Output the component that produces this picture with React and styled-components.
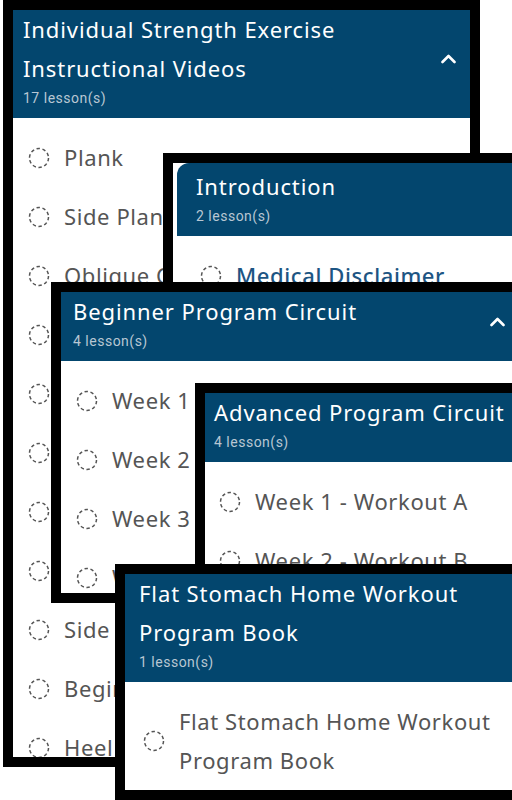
import styled, { createGlobalStyle } from "styled-components";

const GlobalStyle = createGlobalStyle`
  *, *::before, *::after { box-sizing: border-box; }
  html, body { margin: 0; padding: 0; background: #fff; }
  body { font-family: "Noto Sans", "DejaVu Sans", sans-serif; }
`;

// Course sections, each captured as a framed window on the canvas
const sections = [
  {
    id: "strength",
    x: 3, y: 0, w: 477, h: 767,
    title: "Individual Strength Exercise Instructional Videos",
    count: 17,
    open: true,
    lessons: [
      "Plank", "Side Plank", "Oblique Crunch", "Bird Dog", "Glute Bridge",
      "Superman", "Bicycle Crunch", "Reverse Crunch", "Side Lunge",
      "Beginner Push Up", "Heel Touches",
    ],
  },
  {
    id: "intro",
    x: 163, y: 153, w: 400, h: 220,
    title: "Introduction",
    count: 2,
    rounded: true,
    inset: 4,
    padTop: 4,
    headPad: 19,
    indent: 23,
    link: true,
    lessons: ["Medical Disclaimer", "How To Use This Program"],
  },
  {
    id: "beginner",
    x: 51, y: 282, w: 478, h: 321,
    title: "Beginner Program Circuit",
    count: 4,
    open: true,
    headPad: 12,
    lessons: [
      "Week 1 - Workout A", "Week 2 - Workout B",
      "Week 3 - Workout C", "Week 4 - Workout D",
    ],
  },
  {
    id: "advanced",
    x: 195, y: 383, w: 440, h: 250,
    title: "Advanced Program Circuit",
    count: 4,
    open: true,
    headPad: 9,
    indent: 14,
    lessons: ["Week 1 - Workout A", "Week 2 - Workout B", "Week 3 - Workout C"],
  },
  {
    id: "flat",
    x: 115, y: 564, w: 420, h: 236,
    title: "Flat Stomach Home Workout Program Book",
    count: 1,
    headPad: 14,
    indent: 18,
    lessons: ["Flat Stomach Home Workout Program Book"],
  },
];

const DashedCircle = () => (
  <svg width="22" height="22" viewBox="0 0 22 22">
    <circle
      cx="11"
      cy="11"
      r="9.5"
      fill="none"
      stroke="#555"
      strokeWidth="1.5"
      strokeDasharray="3.4 2.6"
    />
  </svg>
);

const ChevronUp = () => (
  <svg width="15" height="10" viewBox="0 0 15 10">
    <polyline
      points="1.5,8 7.5,2 13.5,8"
      fill="none"
      stroke="#fff"
      strokeWidth="2.6"
      strokeLinecap="round"
      strokeLinejoin="round"
    />
  </svg>
);

const Section = ({ s }) => (
  <Frame $x={s.x} $y={s.y} $w={s.w} $h={s.h} $inset={s.inset}>
    <Header $rounded={s.rounded} $pt={s.padTop} $pl={s.headPad}>
      <HeaderText>
        <Title>{s.title}</Title>
        <Count>{s.count} lesson(s)</Count>
      </HeaderText>
      {s.open && (
        <Toggle>
          <ChevronUp />
        </Toggle>
      )}
    </Header>
    <LessonList>
      {s.lessons.map((name) => (
        <Lesson key={name} $indent={s.indent}>
          <Status>
            <DashedCircle />
          </Status>
          <LessonName $link={s.link}>{name}</LessonName>
        </Lesson>
      ))}
    </LessonList>
  </Frame>
);

export default function App() {
  return (
    <>
      <GlobalStyle />
      <Canvas>
        {sections.map((s) => (
          <Section key={s.id} s={s} />
        ))}
      </Canvas>
    </>
  );
}

// --- styles ---

const Canvas = styled.div`
  position: relative;
  width: 512px;
  height: 800px;
  overflow: hidden;
  background: #fff;
`;

const Frame = styled.section`
  position: absolute;
  left: ${(p) => p.$x}px;
  top: ${(p) => p.$y}px;
  width: ${(p) => p.$w}px;
  height: ${(p) => p.$h}px;
  border: 10px solid #000;
  padding-left: ${(p) => p.$inset || 0}px;
  background: #fff;
  overflow: hidden;
  display: flex;
  flex-direction: column;
`;

const Header = styled.header`
  display: flex;
  align-items: center;
  gap: 12px;
  padding: ${(p) => p.$pt || 0}px 14px 10px ${(p) => p.$pl || 10}px;
  background: #03466e;
  color: #fff;
  border-top-left-radius: ${(p) => (p.$rounded ? "12px" : "0")};
  flex-shrink: 0;
`;

const HeaderText = styled.div`
  flex: 1;
  min-width: 0;
`;

const Title = styled.h3`
  margin: 0;
  font-size: 22px;
  font-weight: 400;
  line-height: 39px;
  letter-spacing: 0.9px;
`;

const Count = styled.div`
  font-family: Roboto, "Liberation Sans", sans-serif;
  font-size: 14px;
  line-height: 20px;
  letter-spacing: 0.5px;
  color: #b8c7d3;
`;

const Toggle = styled.span`
  display: flex;
  flex-shrink: 0;
`;

const LessonList = styled.ul`
  list-style: none;
  margin: 0;
  padding: 10px 0 0;
`;

const Lesson = styled.li`
  display: flex;
  align-items: center;
  gap: 14px;
  padding: 10px 12px 10px ${(p) => p.$indent || 15}px;
`;

const Status = styled.span`
  display: flex;
  flex-shrink: 0;
`;

const LessonName = styled.span`
  font-size: 22px;
  line-height: 39px;
  letter-spacing: 0.6px;
  white-space: ${(p) => (p.$link ? "nowrap" : "normal")};
  color: ${(p) => (p.$link ? "#1d5583" : "#555")};
  font-weight: ${(p) => (p.$link ? 500 : 400)};
`;
